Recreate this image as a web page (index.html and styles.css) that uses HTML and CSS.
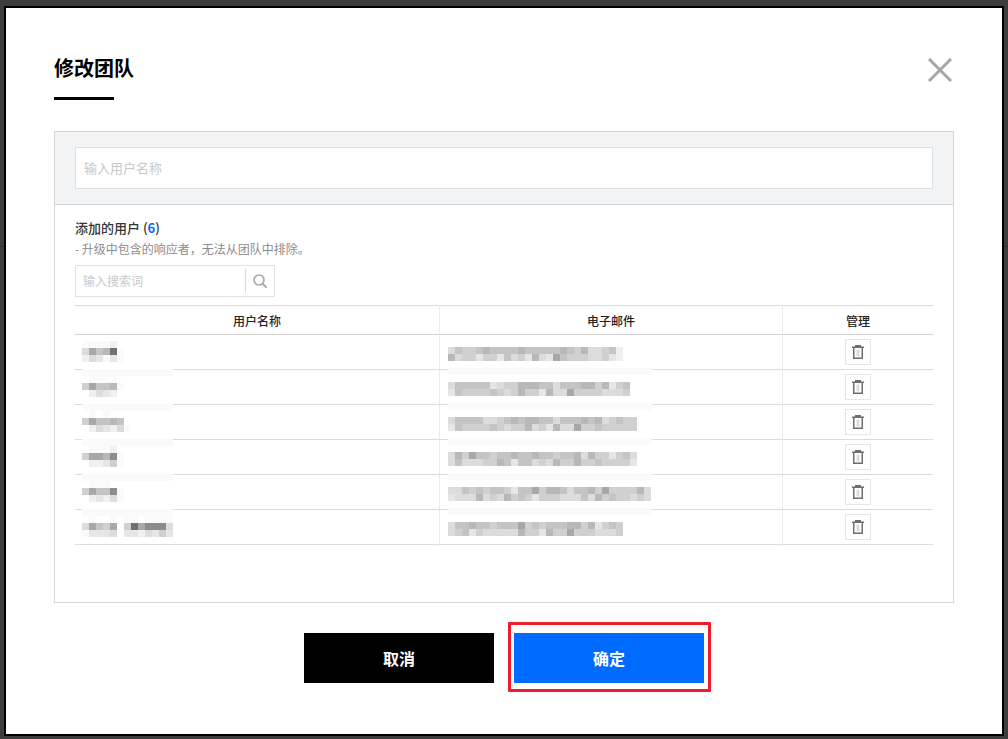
FILE: index.html
```html
<!DOCTYPE html>
<html lang="zh">
<head>
<meta charset="utf-8">
<title>修改团队</title>
<link rel="stylesheet" href="styles.css">
</head>
<body>
<div class="backdrop">
<section class="modal">
  <header class="modal-head">
    <h1 class="modal-title">修改团队</h1>
    <button class="close" type="button" aria-label="关闭">
      <svg width="24" height="24" viewBox="0 0 24 24"><path d="M1 1 23 23M23 1 1 23" fill="none" stroke="#a6a6a6" stroke-width="3"/></svg>
    </button>
  </header>
  <div class="panel">
    <div class="band"><input class="name-input" type="text" placeholder="输入用户名称"></div>
    <div class="panel-body">
      <p class="added">添加的用户 (<b class="count">6</b>)</p>
      <p class="note">- 升级中包含的响应者，无法从团队中排除。</p>
      <div class="search">
        <input class="search-input" type="text" placeholder="输入搜索词">
        <span class="search-btn">
          <svg width="16" height="16" viewBox="0 0 16 16"><circle cx="7" cy="7" r="5" fill="none" stroke="#a8a8a8" stroke-width="1.7"/><path d="M10.7 10.7 14.6 14.6" stroke="#a8a8a8" stroke-width="2"/></svg>
        </span>
      </div>
      <table class="users">
        <colgroup><col class="c-name"><col class="c-mail"><col class="c-act"></colgroup>
        <thead><tr><th>用户名称</th><th class="vl">电子邮件</th><th class="vl">管理</th></tr></thead>
        <tbody>
<tr>
<td><div class="mn"><div class="r"><i class="c1"></i><i class="c1"></i><i class="c1"></i><i class="c1"></i><i class="c2"></i></div><div class="r"><i class="c4"></i><i class="c8"></i><i class="c6"></i><i class="c7"></i><i class="c0"></i><i class="c1"></i></div><div class="r"><i class="c2"></i><i class="c4"></i><i class="c3"></i><i class="c1"></i><i class="c3"></i><i class="c1"></i></div></div></td>
<td class="vl"><div class="mm"><div class="r"><i class="c4"></i><i class="c6"></i><i class="c5"></i><i class="c5"></i><i class="c6"></i><i class="c7"></i><i class="c6"></i><i class="c6"></i><i class="c6"></i><i class="c6"></i><i class="c7"></i><i class="c6"></i><i class="c6"></i><i class="c6"></i><i class="c6"></i><i class="c6"></i><i class="c7"></i><i class="c6"></i><i class="c5"></i><i class="c7"></i><i class="c4"></i><i class="c4"></i><i class="c5"></i><i class="c6"></i><i class="c2"></i></div><div class="r"><i class="c7"></i><i class="c4"></i><i class="c5"></i><i class="c5"></i><i class="c3"></i><i class="c5"></i><i class="c5"></i><i class="c3"></i><i class="c6"></i><i class="c4"></i><i class="c5"></i><i class="c3"></i><i class="c7"></i><i class="c4"></i><i class="c3"></i><i class="c8"></i><i class="c6"></i><i class="c5"></i><i class="c5"></i><i class="c5"></i><i class="c4"></i><i class="c4"></i><i class="c5"></i><i class="c3"></i><i class="c2"></i></div></div></td>
<td class="vl act"><button class="del" type="button" aria-label="删除"><svg width="14" height="16" viewBox="0 0 14 16"><path class="t-in" d="M5.5 5.500h3v7h-3z"/><path class="t-fill" d="M4 1h6v1.500h3V4H1V2.500h3z"/><path class="t-out" d="M2.750 4v10.250h8.500V4"/></svg></button></td>
</tr>
<tr>
<td><div class="mn"><div class="bn"></div><div class="r"><i></i><i class="c1"></i><i class="c1"></i><i class="c1"></i><i class="c1"></i></div><div class="r"><i class="c5"></i><i class="c8"></i><i class="c6"></i><i class="c6"></i><i class="c7"></i><i class="c1"></i></div><div class="r"><i></i><i class="c2"></i><i class="c4"></i><i class="c3"></i><i class="c2"></i></div></div></td>
<td class="vl"><div class="mm"><div class="bm"></div><div class="r"><i class="c4"></i><i class="c6"></i><i class="c6"></i><i class="c6"></i><i class="c6"></i><i class="c6"></i><i class="c3"></i><i class="c4"></i><i class="c5"></i><i class="c5"></i><i class="c7"></i><i class="c7"></i><i class="c7"></i><i class="c6"></i><i class="c6"></i><i class="c4"></i><i class="c6"></i><i class="c6"></i><i class="c6"></i><i class="c7"></i><i class="c7"></i><i class="c5"></i><i class="c7"></i><i class="c3"></i><i class="c5"></i><i class="c6"></i></div><div class="r"><i class="c3"></i><i class="c6"></i><i class="c5"></i><i class="c5"></i><i class="c5"></i><i class="c5"></i><i class="c6"></i><i class="c5"></i><i class="c4"></i><i class="c5"></i><i class="c7"></i><i class="c5"></i><i class="c5"></i><i class="c3"></i><i class="c7"></i><i class="c4"></i><i class="c4"></i><i class="c8"></i><i class="c5"></i><i class="c5"></i><i class="c5"></i><i class="c5"></i><i class="c4"></i><i class="c4"></i><i class="c4"></i><i class="c5"></i></div></div></td>
<td class="vl act"><button class="del" type="button" aria-label="删除"><svg width="14" height="16" viewBox="0 0 14 16"><path class="t-in" d="M5.5 5.500h3v7h-3z"/><path class="t-fill" d="M4 1h6v1.500h3V4H1V2.500h3z"/><path class="t-out" d="M2.750 4v10.250h8.500V4"/></svg></button></td>
</tr>
<tr>
<td><div class="mn"><div class="bn"></div><div class="r"><i></i><i class="c1"></i><i></i><i class="c1"></i></div><div class="r"><i class="c5"></i><i class="c8"></i><i class="c6"></i><i class="c6"></i><i class="c7"></i><i class="c6"></i></div><div class="r"><i></i><i class="c2"></i><i class="c4"></i><i class="c3"></i><i class="c2"></i><i class="c4"></i><i class="c1"></i></div></div></td>
<td class="vl"><div class="mm"><div class="bm"></div><div class="r"><i class="c4"></i><i class="c6"></i><i class="c6"></i><i class="c6"></i><i class="c6"></i><i class="c4"></i><i class="c4"></i><i class="c5"></i><i class="c6"></i><i class="c7"></i><i class="c6"></i><i class="c7"></i><i class="c7"></i><i class="c6"></i><i class="c6"></i><i class="c4"></i><i class="c6"></i><i class="c6"></i><i class="c6"></i><i class="c7"></i><i class="c6"></i><i class="c7"></i><i class="c4"></i><i class="c5"></i><i class="c6"></i><i class="c5"></i><i class="c5"></i></div><div class="r"><i class="c3"></i><i class="c6"></i><i class="c5"></i><i class="c5"></i><i class="c5"></i><i class="c5"></i><i class="c6"></i><i class="c5"></i><i class="c4"></i><i class="c5"></i><i class="c5"></i><i class="c7"></i><i class="c4"></i><i class="c5"></i><i class="c3"></i><i class="c7"></i><i class="c4"></i><i class="c4"></i><i class="c8"></i><i class="c5"></i><i class="c5"></i><i class="c6"></i><i class="c5"></i><i class="c5"></i><i class="c5"></i><i class="c5"></i><i class="c5"></i></div></div></td>
<td class="vl act"><button class="del" type="button" aria-label="删除"><svg width="14" height="16" viewBox="0 0 14 16"><path class="t-in" d="M5.5 5.500h3v7h-3z"/><path class="t-fill" d="M4 1h6v1.500h3V4H1V2.500h3z"/><path class="t-out" d="M2.750 4v10.250h8.500V4"/></svg></button></td>
</tr>
<tr>
<td><div class="mn"><div class="bn"></div><div class="r"><i></i><i class="c1"></i><i class="c1"></i><i class="c1"></i><i class="c2"></i></div><div class="r"><i class="c5"></i><i class="c8"></i><i class="c8"></i><i class="c7"></i><i class="c9"></i><i class="c1"></i></div><div class="r"><i></i><i class="c2"></i><i class="c2"></i><i class="c3"></i><i class="c5"></i><i class="c1"></i></div></div></td>
<td class="vl"><div class="mm"><div class="bm"></div><div class="r"><i class="c4"></i><i class="c7"></i><i class="c5"></i><i class="c8"></i><i class="c6"></i><i class="c6"></i><i class="c5"></i><i class="c6"></i><i class="c6"></i><i class="c7"></i><i class="c6"></i><i class="c6"></i><i class="c7"></i><i class="c6"></i><i class="c6"></i><i class="c5"></i><i class="c6"></i><i class="c6"></i><i class="c7"></i><i class="c4"></i><i class="c7"></i><i class="c5"></i><i class="c5"></i><i class="c3"></i><i class="c5"></i><i class="c6"></i><i class="c4"></i></div><div class="r"><i class="c4"></i><i class="c6"></i><i class="c4"></i><i class="c4"></i><i class="c4"></i><i class="c5"></i><i class="c5"></i><i class="c7"></i><i class="c6"></i><i class="c3"></i><i class="c6"></i><i class="c6"></i><i class="c4"></i><i class="c5"></i><i class="c4"></i><i class="c7"></i><i class="c5"></i><i class="c5"></i><i class="c7"></i><i class="c5"></i><i class="c5"></i><i class="c6"></i><i class="c5"></i><i class="c5"></i><i class="c5"></i><i class="c5"></i><i class="c3"></i></div></div></td>
<td class="vl act"><button class="del" type="button" aria-label="删除"><svg width="14" height="16" viewBox="0 0 14 16"><path class="t-in" d="M5.5 5.500h3v7h-3z"/><path class="t-fill" d="M4 1h6v1.500h3V4H1V2.500h3z"/><path class="t-out" d="M2.750 4v10.250h8.500V4"/></svg></button></td>
</tr>
<tr>
<td><div class="mn"><div class="bn"></div><div class="r"><i></i><i class="c1"></i><i class="c1"></i><i class="c1"></i></div><div class="r"><i class="c5"></i><i class="c8"></i><i class="c6"></i><i class="c6"></i><i class="c9"></i><i class="c1"></i></div><div class="r"><i></i><i class="c2"></i><i class="c3"></i><i class="c2"></i><i class="c4"></i><i class="c1"></i></div></div></td>
<td class="vl"><div class="mm"><div class="bm"></div><div class="r"><i class="c4"></i><i class="c4"></i><i class="c6"></i><i class="c5"></i><i class="c6"></i><i class="c5"></i><i class="c6"></i><i class="c6"></i><i class="c5"></i><i class="c3"></i><i class="c6"></i><i class="c6"></i><i class="c8"></i><i class="c5"></i><i class="c7"></i><i class="c7"></i><i class="c6"></i><i class="c4"></i><i class="c6"></i><i class="c6"></i><i class="c7"></i><i class="c5"></i><i class="c8"></i><i class="c5"></i><i class="c5"></i><i class="c5"></i><i class="c5"></i><i class="c7"></i><i class="c4"></i></div><div class="r"><i class="c3"></i><i class="c4"></i><i class="c4"></i><i class="c4"></i><i class="c7"></i><i class="c4"></i><i class="c5"></i><i class="c4"></i><i class="c7"></i><i class="c5"></i><i class="c6"></i><i class="c5"></i><i class="c3"></i><i class="c5"></i><i class="c5"></i><i class="c5"></i><i class="c4"></i><i class="c4"></i><i class="c4"></i><i class="c6"></i><i class="c4"></i><i class="c7"></i><i class="c5"></i><i class="c6"></i><i class="c5"></i><i class="c5"></i><i class="c4"></i><i class="c5"></i><i class="c4"></i></div></div></td>
<td class="vl act"><button class="del" type="button" aria-label="删除"><svg width="14" height="16" viewBox="0 0 14 16"><path class="t-in" d="M5.5 5.500h3v7h-3z"/><path class="t-fill" d="M4 1h6v1.500h3V4H1V2.500h3z"/><path class="t-out" d="M2.750 4v10.250h8.500V4"/></svg></button></td>
</tr>
<tr>
<td><div class="mn"><div class="bn"></div><div class="r"><i></i><i class="c1"></i><i></i><i></i><i class="c1"></i><i></i><i class="c1"></i><i class="c1"></i><i></i><i class="c1"></i><i class="c1"></i><i class="c1"></i><i class="c1"></i></div><div class="r"><i class="c4"></i><i class="c8"></i><i class="c6"></i><i class="c5"></i><i class="c8"></i><i></i><i class="c5"></i><i class="c0"></i><i class="c8"></i><i class="c9"></i><i class="c9"></i><i class="c9"></i><i class="c4"></i></div><div class="r"><i class="c1"></i><i class="c3"></i><i class="c3"></i><i class="c3"></i><i class="c4"></i><i></i><i class="c3"></i><i class="c3"></i><i class="c2"></i><i class="c4"></i><i class="c3"></i><i class="c5"></i><i class="c3"></i></div></div></td>
<td class="vl"><div class="mm"><div class="bm"></div><div class="r"><i class="c4"></i><i class="c6"></i><i class="c6"></i><i class="c7"></i><i class="c6"></i><i class="c6"></i><i class="c5"></i><i class="c6"></i><i class="c6"></i><i class="c6"></i><i class="c8"></i><i class="c5"></i><i class="c6"></i><i class="c5"></i><i class="c6"></i><i class="c6"></i><i class="c6"></i><i class="c7"></i><i class="c7"></i><i class="c5"></i><i class="c7"></i><i class="c3"></i><i class="c5"></i><i class="c6"></i><i class="c5"></i></div><div class="r"><i class="c4"></i><i class="c5"></i><i class="c6"></i><i class="c3"></i><i class="c5"></i><i class="c4"></i><i class="c4"></i><i class="c4"></i><i class="c4"></i><i class="c4"></i><i class="c7"></i><i class="c5"></i><i class="c5"></i><i class="c3"></i><i class="c7"></i><i class="c5"></i><i class="c5"></i><i class="c8"></i><i class="c5"></i><i class="c5"></i><i class="c5"></i><i class="c4"></i><i class="c4"></i><i class="c4"></i><i class="c5"></i></div></div></td>
<td class="vl act"><button class="del" type="button" aria-label="删除"><svg width="14" height="16" viewBox="0 0 14 16"><path class="t-in" d="M5.5 5.500h3v7h-3z"/><path class="t-fill" d="M4 1h6v1.500h3V4H1V2.500h3z"/><path class="t-out" d="M2.750 4v10.250h8.500V4"/></svg></button></td>
</tr>
        </tbody>
      </table>
    </div>
  </div>
  <footer class="actions">
    <button class="btn btn-cancel" type="button">取消</button>
    <button class="btn btn-ok" type="button">确定<span class="highlight"></span></button>
  </footer>
</section>
</div>
</body>
</html>
```

FILE: styles.css
```css
* { box-sizing: border-box; }
html, body { margin: 0; height: 100%; }
body {
  font-family: "Noto Sans CJK SC", "Noto Sans", sans-serif;
  color: #000;
  overflow: hidden;
}
.backdrop {
  height: 739px;
  background:
    linear-gradient(#2f2f2f, #2f2f2f) 0 246px / 100% 1px no-repeat,
    linear-gradient(#383838, #383838) 0 44px / 100% 1px no-repeat,
    #3d3d3d;
  padding: 6px 4px 3px;
}
.modal {
  height: 730px;
  background: #fff;
  border: 2px solid #000;
  padding: 45px 48px 0;
}
.modal-head {
  position: relative;
  height: 78px;
}
.modal-title {
  margin: 0;
  font-size: 20px;
  line-height: 30px;
  font-weight: 700;
}
.modal-title::after {
  content: "";
  display: block;
  width: 60px;
  height: 3px;
  margin-top: 14px;
  background: #000;
}
.close {
  position: absolute;
  top: 5px;
  right: 2px;
  width: 24px;
  height: 24px;
  padding: 0;
  border: 0;
  background: none;
}
.close svg { display: block; }
.panel {
  height: 472px;
  border: 1px solid #d4d7da;
}
.band {
  height: 73px;
  padding: 15px 20px;
  background: #f1f3f5;
  border-bottom: 1px solid #d4d7da;
}
.name-input {
  display: block;
  width: 100%;
  height: 42px;
  padding: 0 8px 2px;
  border: 1px solid #dcdfe2;
  background: #fff;
  font: 13px "Noto Sans CJK SC", sans-serif;
  outline: 0;
}
.name-input::placeholder, .search-input::placeholder { color: #c8c8c8; opacity: 1; }
.panel-body { padding: 13px 20px 0; }
.added {
  margin: 0;
  font-size: 13px;
  line-height: 19px;
  font-weight: 500;
  color: #333;
}
.count { color: #006cff; font-weight: 700; }
.note {
  margin: 3px 0 0;
  font-size: 12px;
  line-height: 18px;
  color: #8c8c8c;
}
.search {
  display: flex;
  width: 200px;
  height: 32px;
  margin-top: 7px;
  border: 1px solid #e3e3e3;
}
.search-input {
  flex: 1;
  min-width: 0;
  padding: 0 7px 2px;
  border: 0;
  outline: 0;
  font: 12px "Noto Sans CJK SC", sans-serif;
}
.search-btn {
  display: flex;
  align-items: center;
  justify-content: center;
  width: 29px;
  height: 24px;
  margin-top: 3px;
  border-left: 1px solid #d8d8d8;
}
.users {
  width: 858px;
  margin-top: 8px;
  table-layout: fixed;
  border-collapse: separate;
  border-spacing: 0;
  font-size: 12px;
}
.c-name { width: 364px; }
.c-mail { width: 343px; }
.c-act { width: 151px; }
.users th {
  height: 30px;
  padding: 0;
  font-weight: 500;
  color: #222;
  border-top: 1px solid #dcdcdc;
  border-bottom: 1px solid #d4d4d4;
}
.users td {
  position: relative;
  height: 35px;
  padding: 0;
  border-bottom: 1px solid #dcdcdc;
}
.users .vl { border-left: 1px solid #ececec; }
.act { text-align: center; }
.del {
  display: inline-flex;
  align-items: center;
  justify-content: center;
  width: 26px;
  height: 26px;
  padding: 0;
  vertical-align: middle;
  background: #fff;
  border: 1px solid #e6e6e6;
}
.t-in { fill: #dcdcdc; }
.t-fill { fill: #6e6e6e; }
.t-out { fill: none; stroke: #6e6e6e; stroke-width: 1.5; }
.mn { position: absolute; top: 6px; left: 7px; }
.mm { position: absolute; top: 12px; left: 8px; }
.bn, .bm { position: absolute; background: #fafafa; height: 7px; }
.bn { top: -7px; left: 0; width: 91px; }
.bm { top: -14px; left: 0; width: 204px; }
.r { display: flex; height: 7px; }
.r i { flex: none; width: 7px; height: 7px; }
.c1 { background: #fafafa; }
.c2 { background: #f0f0f0; }
.c3 { background: #e6e6e6; }
.c4 { background: #dcdcdc; }
.c5 { background: #d0d0d0; }
.c6 { background: #c4c4c4; }
.c7 { background: #b8b8b8; }
.c8 { background: #a8a8a8; }
.c9 { background: #8c8c8c; }
.c0 { background: #707070; }
.actions {
  display: flex;
  justify-content: center;
  gap: 20px;
  margin-top: 30px;
}
.btn {
  position: relative;
  width: 190px;
  height: 50px;
  padding: 0;
  border: 0;
  color: #fff;
  font: 700 16px "Noto Sans CJK SC", sans-serif;
}
.btn-cancel { background: #000; }
.btn-ok { background: #006cff; }
.highlight {
  position: absolute;
  top: -11px;
  left: -6px;
  width: 203px;
  height: 70px;
  border: 3px solid #ed1c2e;
  border-radius: 1px;
}
```
